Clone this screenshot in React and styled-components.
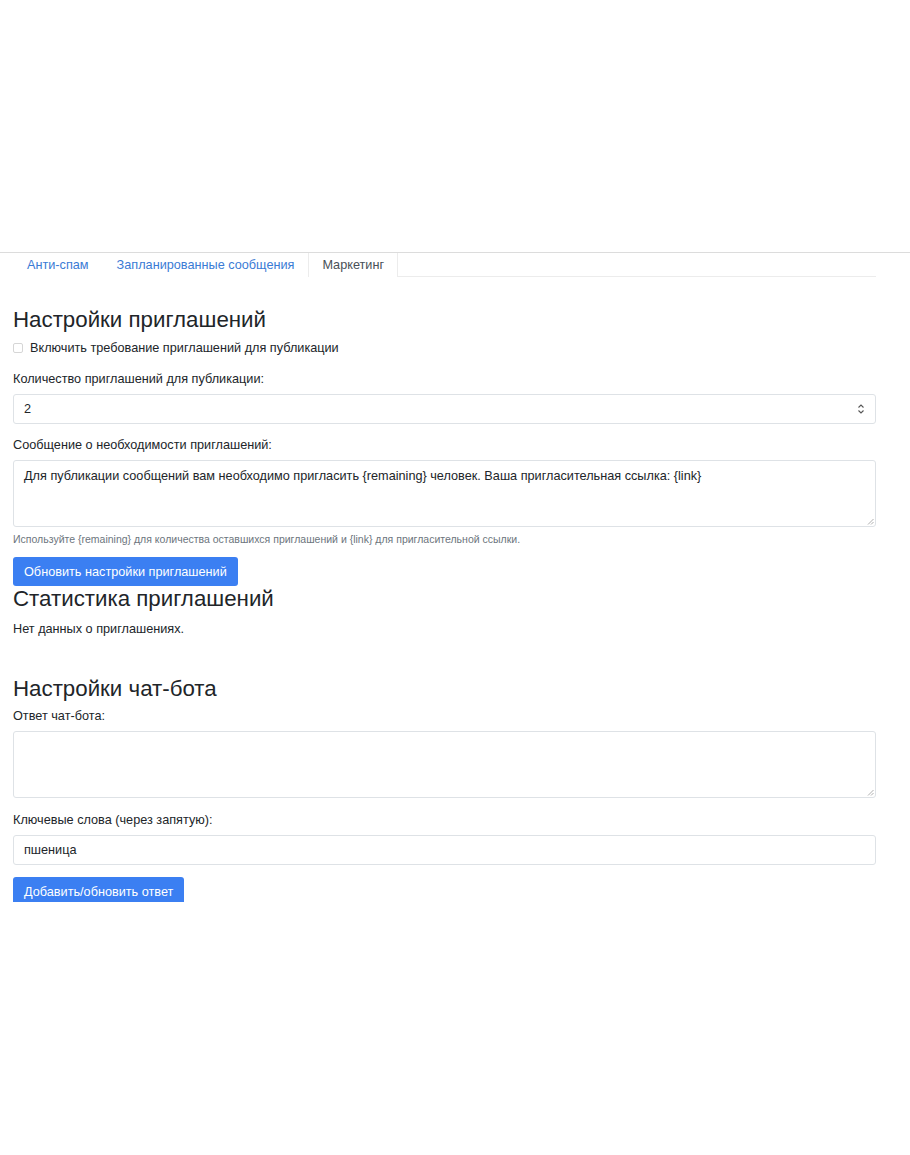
import React from 'react';
import styled, { createGlobalStyle } from 'styled-components';

const GlobalStyle = createGlobalStyle`
  html, body {
    margin: 0;
    padding: 0;
    background: #ffffff;
  }
  body {
    font-family: "Liberation Sans", Arial, sans-serif;
    color: #212529;
    font-size: 12.7px;
  }
`;

const Page = styled.div`
  width: 910px;
  height: 1155px;
  display: flex;
  flex-direction: column;
`;

const Blank = styled.div`
  height: 252px;
  flex: none;
`;

const Viewport = styled.div`
  border-top: 1px solid #dcdcdc;
  height: 649px;
  overflow: hidden;
  padding: 0 34px 0 13px;
`;

const Tabs = styled.ul`
  list-style: none;
  margin: 0;
  padding: 0;
  display: flex;
  border-bottom: 1px solid #ececec;
`;

const Tab = styled.li`
  padding: 4px 13px 0;
  height: 20px;
  line-height: 17px;
  font-size: 12.7px;
  color: ${p => (p.active ? '#495057' : '#3a7bd5')};
  border-left: 1px solid ${p => (p.active ? '#ececec' : 'transparent')};
  border-right: 1px solid ${p => (p.active ? '#ececec' : 'transparent')};
  background: #fff;
  margin-bottom: -1px;
`;

const Heading = styled.h3`
  margin: ${p => p.top || 0}px 0 ${p => p.bottom ?? 8}px;
  font-size: 22.3px;
  font-weight: 500;
  line-height: 26px;
`;

const CheckRow = styled.label`
  display: flex;
  align-items: center;
  gap: 7px;
  margin-bottom: 15px;
`;

const Box = styled.span`
  width: 8px;
  height: 8px;
  border: 1px solid #d6d6d6;
  border-radius: 2px;
  background: #fff;
`;

const Label = styled.div`
  line-height: 18px;
  margin-bottom: 6px;
`;

const Field = styled.div`
  height: 28px;
  border: 1px solid #dee2e6;
  border-radius: 3px;
  display: flex;
  align-items: center;
  justify-content: space-between;
  padding: 0 10px;
  margin-bottom: 12px;
`;

const Spinner = styled.svg`
  width: 8px;
  height: 12px;
`;

const Area = styled.div`
  position: relative;
  height: 57px;
  border: 1px solid #dee2e6;
  border-radius: 3px;
  padding: 6px 10px 2px;
  line-height: 18px;
  margin-bottom: ${p => p.mb || 13}px;
`;

const Grip = styled.svg`
  position: absolute;
  right: 1px;
  bottom: 1px;
  width: 7px;
  height: 7px;
`;

const Help = styled.div`
  font-size: 10.5px;
  color: #6c757d;
  line-height: 12px;
  margin-bottom: 12px;
`;

const Button = styled.button`
  display: inline-block;
  height: 29px;
  padding: 0 11px;
  border: 0;
  border-radius: 3px;
  background: #3b7ff2;
  color: #fff;
  font-family: inherit;
  font-size: 12.7px;
`;

const Text = styled.p`
  margin: 0 0 38px;
  line-height: 18px;
`;

const ResizeGrip = () => (
  <Grip viewBox="0 0 7 7">
    <path d="M6.5 1 L1 6.5 M6.5 4 L4 6.5" stroke="#9a9a9a" strokeWidth="0.8" />
  </Grip>
);

export default function App() {
  return (
    <Page>
      <GlobalStyle />
      <Blank />
      <Viewport>
        <Tabs>
          <Tab>Анти-спам</Tab>
          <Tab>Запланированные сообщения</Tab>
          <Tab active>Маркетинг</Tab>
        </Tabs>

        <Heading top={30}>Настройки приглашений</Heading>
        <CheckRow>
          <Box />
          Включить требование приглашений для публикации
        </CheckRow>

        <Label>Количество приглашений для публикации:</Label>
        <Field>
          <span>2</span>
          <Spinner viewBox="0 0 8 12">
            <path d="M1.5 4.5 L4 2 L6.5 4.5 M1.5 7.5 L4 10 L6.5 7.5" fill="none" stroke="#555" strokeWidth="1.1" />
          </Spinner>
        </Field>

        <Label>Сообщение о необходимости приглашений:</Label>
        <Area mb={6}>
          Для публикации сообщений вам необходимо пригласить {'{remaining}'} человек. Ваша пригласительная ссылка: {'{link}'}
          <ResizeGrip />
        </Area>
        <Help>
          Используйте {'{remaining}'} для количества оставшихся приглашений и {'{link}'} для пригласительной ссылки.
        </Help>
        <Button>Обновить настройки приглашений</Button>

        <Heading>Статистика приглашений</Heading>
        <Text>Нет данных о приглашениях.</Text>

        <Heading bottom={5}>Настройки чат-бота</Heading>
        <Label>Ответ чат-бота:</Label>
        <Area>
          <ResizeGrip />
        </Area>

        <Label>Ключевые слова (через запятую):</Label>
        <Field>
          <span>пшеница</span>
        </Field>
        <Button>Добавить/обновить ответ</Button>
      </Viewport>
    </Page>
  );
}
